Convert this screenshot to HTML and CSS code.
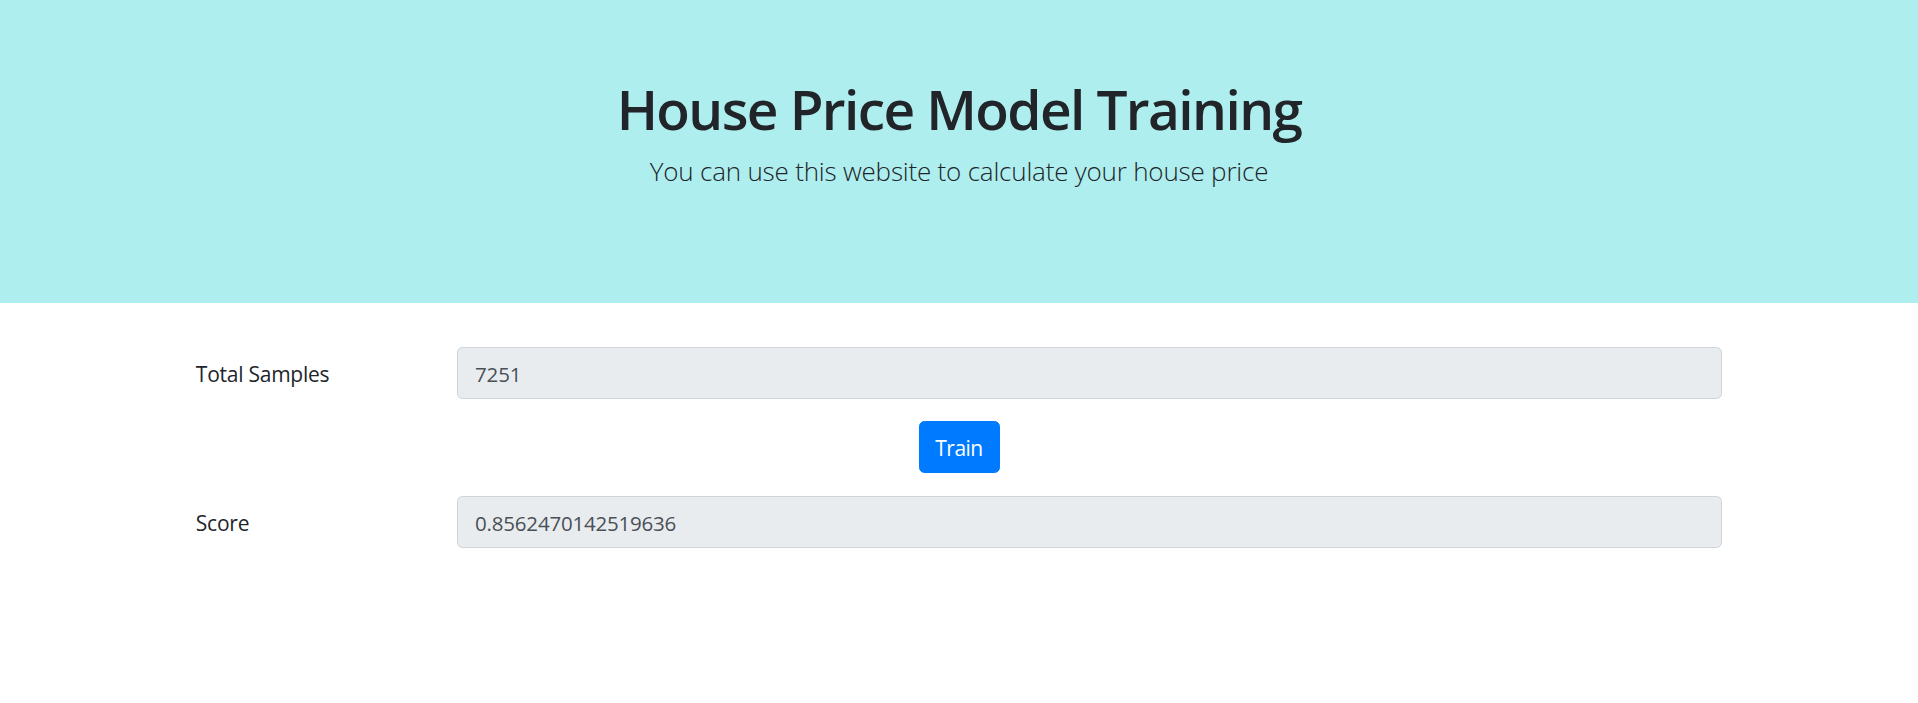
FILE: index.html
```html
<!DOCTYPE html>
<html lang="en">
<head>
<meta charset="utf-8">
<title>House Price Model Training</title>
<link rel="stylesheet" href="styles.css">
</head>
<body>
<header class="hero">
  <h1 class="hero-title">House Price Model Training</h1>
  <p class="hero-lead">You can use this website to calculate your house price</p>
</header>
<main class="container">
  <div class="form-row">
    <label class="form-label">Total Samples</label>
    <div class="form-field"><input class="form-input" type="text" value="7251" readonly></div>
  </div>
  <div class="button-row">
    <button class="btn-primary" type="button">Train</button>
  </div>
  <div class="form-row">
    <label class="form-label">Score</label>
    <div class="form-field"><input class="form-input" type="text" value="0.8562470142519636" readonly></div>
  </div>
</main>
</body>
</html>
```
FILE: styles.css
```css
* { box-sizing: border-box; }
html, body { margin: 0; padding: 0; }
body {
  font-family: "Open Sans", "Noto Sans", sans-serif;
  font-size: 21px;
  letter-spacing: -0.25px;
  line-height: 1.5;
  color: #212529;
  background: #fff;
}
.hero {
  background: #afeeee;
  height: 303px;
  padding: 76px 20px 0;
  text-align: center;
  margin-bottom: 44px;
}
.hero-title {
  margin: 0 0 9px;
  font-size: 55px;
  line-height: 66px;
  font-weight: 600;
  letter-spacing: -1.6px;
}
.hero-lead {
  margin: 0;
  font-size: 26px;
  line-height: 41px;
  font-weight: 300;
  letter-spacing: -0.2px;
}
.container {
  width: 1567.5px;
  margin: 0 auto;
}
.form-row {
  display: flex;
  align-items: center;
  height: 52px;
}
.form-label {
  width: 261.25px;
  padding: 2px 20.6px 0;
  line-height: 33px;
}
.form-field {
  flex: 1;
  padding: 0 20.6px;
}
.form-input {
  display: block;
  width: 100%;
  height: 52px;
  padding: 2px 17px 0;
  font-family: inherit;
  font-size: 20.5px;
  letter-spacing: -0.2px;
  color: #495057;
  background: #e9ecef;
  border: 1.375px solid #ced4da;
  border-radius: 5.5px;
  outline: none;
}
.button-row {
  display: flex;
  justify-content: center;
  margin: 22px 0 23px;
}
.btn-primary {
  width: 81px;
  height: 52px;
  padding: 2px 0 0;
  font-family: inherit;
  font-size: 21px;
  letter-spacing: -0.5px;
  color: #fff;
  background: #007bff;
  border: 1.375px solid #007bff;
  border-radius: 5.5px;
}
```
